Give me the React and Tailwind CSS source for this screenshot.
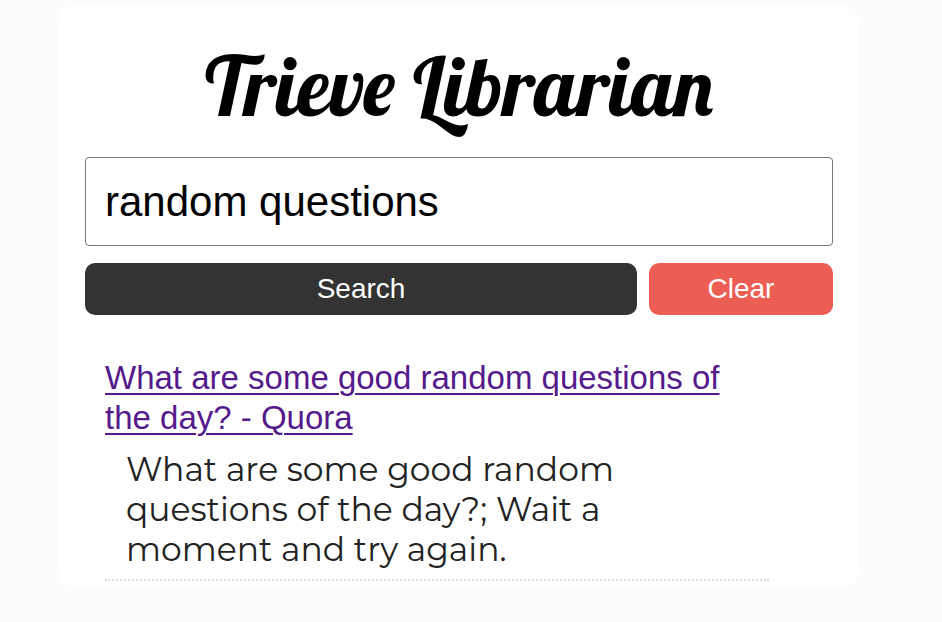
import { useState } from "react";

const results = [
  {
    title: "What are some good random questions of the day? - Quora",
    summary:
      "What are some good random questions of the day?; Wait a moment and try again.",
  },
];

function Result({ title, summary }) {
  return (
    <li className="border-b-2 border-dotted border-[#dddddd] pb-[10px]">
      <a
        href="#"
        className="block text-[33px] leading-[40px] text-[#551a8b] underline decoration-2 underline-offset-4"
      >
        {title}
      </a>
      <p className="mt-[11px] pl-[21px] pr-28 font-['Montserrat','Inter',sans-serif] text-[33px] leading-[40px] font-normal text-[#222222]">
        {summary}
      </p>
    </li>
  );
}

export default function App() {
  const [query, setQuery] = useState("random questions");

  return (
    <div className="min-h-screen bg-[#fcfcfc] pt-1.5 pr-[84px] pb-9 pl-[58px] font-['Liberation_Sans',Arial,sans-serif]">
      <main className="rounded-2xl bg-white pt-8 pr-[25px] pb-1.5 pl-[27px]">
        <h1 className="text-center font-['Lobster','Liberation_Serif',serif] text-[83px] leading-[94px] font-normal text-black">
          Trieve Librarian
        </h1>

        <form className="mt-[25px]" onSubmit={(event) => event.preventDefault()}>
          <input
            type="text"
            aria-label="Search query"
            value={query}
            onChange={(event) => setQuery(event.target.value)}
            className="block h-[89px] w-full rounded border border-[#767676] bg-white px-[19px] text-[42px] text-black"
          />
          <div className="mt-[17px] flex gap-3">
            <button
              type="submit"
              className="h-[52px] flex-3 rounded-[10px] bg-[#333333] text-[28px] text-white"
            >
              Search
            </button>
            <button
              type="button"
              onClick={() => setQuery("")}
              className="h-[52px] flex-1 rounded-[10px] bg-[#ec5e54] text-[28px] text-white"
            >
              Clear
            </button>
          </div>
        </form>

        <ul className="mt-[43px] pr-16 pl-5">
          {results.map((result) => (
            <Result key={result.title} {...result} />
          ))}
        </ul>
      </main>
    </div>
  );
}
